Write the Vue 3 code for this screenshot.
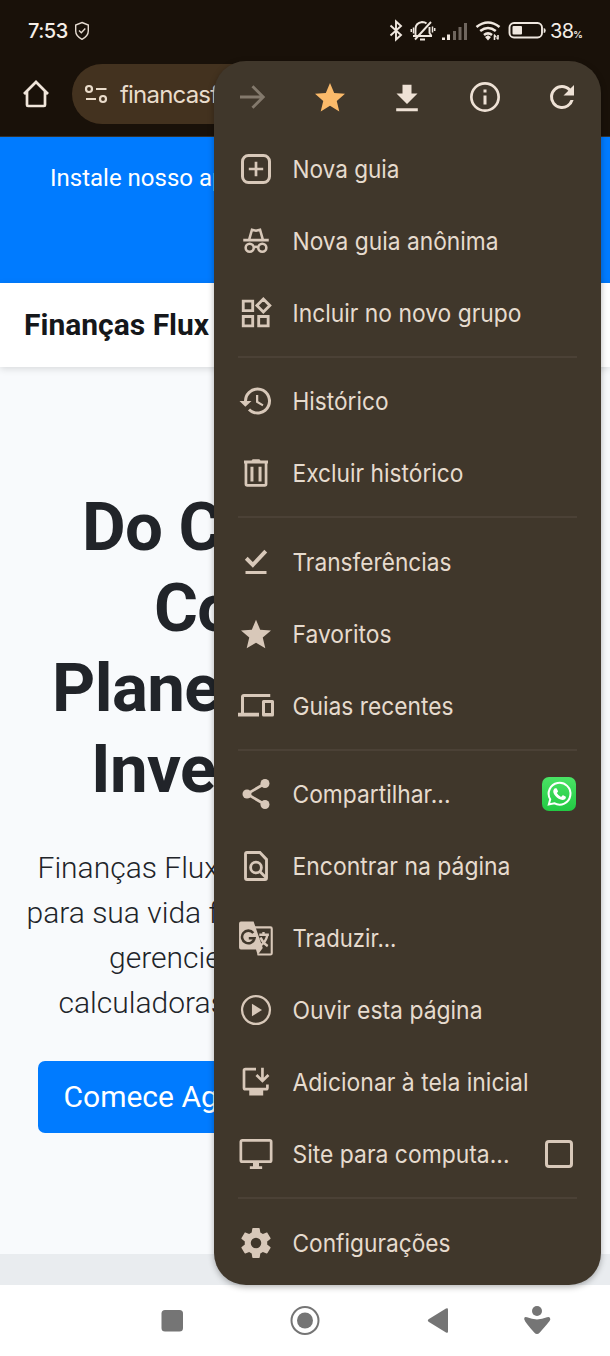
<script setup>
const line = 'fill="none" stroke="currentColor"'

const toolbar = [
  { name: 'forward', svg: `<path ${line} stroke-width="1.9" d="M4 12h15M12.3 4.8 19.5 12l-7.2 7.2"/>` },
  { name: 'star', svg: '<path d="M12 17.9 18.2 21.600 16.5 14.600 22 9.900l-7.2-.6L12 2.600 9.2 9.300 2 9.900l5.5 4.7-1.7 7z"/>' },
  { name: 'download', svg: '<path d="M19 9.700h-4V3.900H9v5.8H5l7 7zM4.8 19.500v2h14.4v-2z"/>' },
  { name: 'info', svg: `<circle ${line} stroke-width="1.8" cx="12" cy="12" r="9.1"/><path d="M11 11h2v6h-2zM11 7h2v2h-2z"/>` },
  { name: 'reload', svg: '<path d="M17.65 6.35A7.96 7.96 0 0 0 12 4a8 8 0 1 0 7.73 10h-2.08A6 6 0 1 1 12 6c1.66 0 3.14.69 4.22 1.78L13 11h7V4z"/>' },
]

const groups = [
  [
    { label: 'Nova guia', w: 107, svg: `<rect ${line} stroke-width="2" x="3" y="3" width="18" height="18" rx="4"/><path ${line} stroke-width="1.8" d="M12 7.2v9.6M7.2 12h9.6"/>` },
    { label: 'Nova guia anônima', w: 206, svg: `<path ${line} stroke-width="1.7" d="M3.5 11.4h17M7.400 11.200l1.900-6.700 2.700.7 2.700-.7 1.900 6.700"/><g ${line} stroke-width="1.700"><circle cx="7.800" cy="16.500" r="2.700"/><circle cx="16.200" cy="16.500" r="2.700"/><path d="M10.500 16.300q1.500-1 3 0"/></g>` },
    { label: 'Incluir no novo grupo', w: 229, svg: `<g ${line} stroke-width="1.9"><path d="M3.5 4.1h6.3v6.3H3.5zM3.5 14.3h6.3v6.3H3.5zM13.8 14.3h6.3v6.3h-6.3zM16.9 2.7l4.3 4.3-4.3 4.3-4.3-4.3z"/></g>` },
  ],
  [
    { label: 'Histórico', w: 96, svg: '<path d="M13 3a9 9 0 0 0-9 9H1l3.9 3.9L9 12H6a7 7 0 1 1 2.06 4.94l-1.42 1.42A9 9 0 1 0 13 3zm-1 5v5l4.3 2.5.7-1.2-3.5-2.1V8z"/>' },
    { label: 'Excluir histórico', w: 171, svg: `<path ${line} stroke-width="1.8" d="M5.3 5.2v14.1q0 .9.9.9h11.6q.9 0 .9-.9V5.2"/><path d="M4 3.7h5l.8-.8h4.4l.8.8h5v1.9H4zM8.3 7.8h2v9.8h-2zM13.7 7.8h2v9.8h-2z"/>` },
  ],
  [
    { label: 'Transferências', w: 159, svg: `<path ${line} stroke-width="2.600" d="M5.500 9.500l4.400 4.400L18.500 4.800"/><path d="M5 18h14v2H5z"/>` },
    { label: 'Favoritos', w: 99, svg: '<path d="M12 17.8 18.2 21.5 16.5 14.4 22 9.7l-7.2-.6L12 2.5 9.2 9.1 2 9.7l5.5 4.7-1.7 7.1z"/>' },
    { label: 'Guias recentes', w: 161, svg: '<path d="M4 6h17.5V4H4a2 2 0 0 0-2 2v10.5H0V19h14v-2.5H4zM23 8h-6a1 1 0 0 0-1 1v9a1 1 0 0 0 1 1h6a1 1 0 0 0 1-1V9a1 1 0 0 0-1-1zm-1 8.7h-4V10h4z"/>' },
  ],
  [
    { label: 'Compartilhar...', w: 158, end: 'whatsapp', svg: `<path ${line} stroke-width="1.8" d="M18 5 6 12l12 7"/><circle cx="18" cy="5" r="3"/><circle cx="6" cy="12" r="3"/><circle cx="18" cy="19" r="3"/>` },
    { label: 'Encontrar na página', w: 218, svg: `<path ${line} stroke-width="1.9" d="M6 3h8.6L19 7.6V20q0 1-1 1H6q-1 0-1-1V4q0-1 1-1z"/><circle ${line} stroke-width="1.9" cx="12" cy="13" r="3.6"/><path ${line} stroke-width="1.9" d="m14.6 15.6 4 4"/>` },
    { label: 'Traduzir...', w: 104, svg: `<path ${line} stroke-width="1.400" d="M11 4.9h10.6q.9 0 .9.9v16.300q0 .9-.9.9H13"/><path fill="currentColor" d="M2 1h8.4l6.1 17.7-3.4 4.700-1.1-3.8H2q-1.3 0-1.3-1.3V2.3Q.7 1 2 1z"/><path ${line} stroke-width="1.600" d="M14.2 9.8h6.4M17 8v1.8M19.6 10q-1 4.6-4.5 7M15 11.7q1.5 3.7 4.8 5.7"/><path fill="none" stroke="#40372b" stroke-width="1.7" d="M10.2 8.700A4.200 4.200 0 1 0 11 12.100H7.2"/>` },
    { label: 'Ouvir esta página', w: 190, svg: `<circle ${line} stroke-width="1.5" cx="12" cy="12" r="9.3"/><path d="M9.3 7.9v8.2L16 12z"/>` },
    { label: 'Adicionar à tela inicial', w: 236, svg: `<path ${line} stroke-width="1.8" d="M12 3.4H5q-1 0-1 1v11.4q0 1 1 1h13.6q1 0 1-1v-2.1M16.3 2.5v8M12.3 7.3l4 4 4-4"/><path d="M7.500 17h9.300v4H7.500z"/>` },
    { label: 'Site para computa...', w: 217, end: 'checkbox', svg: `<rect ${line} stroke-width="1.8" x="1.9" y="2.9" width="20.2" height="14.2" rx="1"/><path d="M10 18h4v2.2h2.1V22H7.900v-1.800H10z"/>` },
  ],
  [
    { label: 'Configurações', w: 158, svg: '<path d="M19.43 12.98c.04-.32.07-.64.07-.98s-.03-.66-.07-.98l2.110-1.650c.19-.15.24-.42.12-.64l-2-3.460c-.12-.22-.39-.3-.61-.22l-2.490 1c-.52-.4-1.080-.73-1.690-.98l-.38-2.650A.49.49 0 0 0 14 2h-4c-.25 0-.46.18-.49.42l-.38 2.650c-.61.25-1.170.59-1.690.98l-2.490-1c-.23-.09-.49 0-.61.22l-2 3.460c-.13.22-.07.49.12.64l2.110 1.650c-.04.32-.07.65-.07.98s.03.66.07.98l-2.110 1.650c-.19.15-.24.42-.12.64l2 3.460c.12.22.39.3.61.22l2.490-1c.52.4 1.080.73 1.690.98l.38 2.650c.03.24.24.42.49.42h4c.25 0 .46-.18.49-.42l.38-2.650c.61-.25 1.170-.59 1.690-.98l2.490 1c.23.09.49 0 .61-.22l2-3.460c.12-.22.07-.49-.12-.64zM12 15.500a3.500 3.500 0 1 1 0-7 3.500 3.500 0 0 1 0 7z"/>' },
  ],
]
</script>

<template>
  <div class="phone">
    <header class="chrome">
      <div class="status">
        <span class="time">7:53</span>
        <svg class="shield" viewBox="0 0 16 20"><path d="M8 1.500 14.300 4v6q0 5-6.300 8.300Q1.700 15 1.700 10V4z" /><path d="m5 9.500 2.300 2.200L11.300 7.500" /></svg>
        <svg class="signals" viewBox="0 0 160 24">
          <g class="stroke">
            <path d="m2.500 6.500 10.500 9.500L8 20.500v-18L13 7 2.500 16.500" />
            <path d="M25 17h19M27.500 16V10q0-6 6.500-7 3 0 4.500 1.500M41.500 8v6l2 3M27 20.500 43 3M32 20.500h5" />
            <path stroke-width="1.500" d="M25.500 8.500v6M23.300 10v3M44.500 7.500v6M46.700 9v3" />
          </g>
          <g class="bars"><path d="M54 18.500h3V21h-3zM59 15.500h3V21h-3z" /><path opacity=".4" d="M65 12h3v9h-3zM70.500 8h3v13h-3zM76 4h3v17h-3z" /></g>
          <g class="stroke wifi"><path d="M88.500 8q11.500-9 23 0M92.200 12q7.800-6 15.600 0M96 16q4-3.200 8 0" /></g>
          <path class="fill" d="m97 18 3-1.700 3 1.700-3 3.500zM106.500 15l2.500 3h-1.700v3h-1.600v-5zM110 21l-2.500-2.500h1.700V16h1.600v4z" />
          <rect class="stroke" x="121.500" y="4" width="32.500" height="14.500" rx="4.500" />
          <rect class="fill" x="124.500" y="7" width="9.500" height="8.500" rx="1" />
          <path class="fill" d="M155.700 9q2 0 2 2.500t-2 2.500z" />
        </svg>
        <span class="charge">38<small>%</small></span>
      </div>
      <div class="address">
        <svg class="home" viewBox="0 0 28 28"><path d="M2 14 14 2l12 12M5 11.500V25q0 1 1 1h16q1 0 1-1V11.500" /></svg>
        <div class="pill">
          <svg viewBox="0 0 24 20"><circle cx="5" cy="5" r="3" /><circle cx="19" cy="15" r="3" /><path d="M12 5h10.500M2 15h10" /></svg>
          <span>financasf</span>
        </div>
      </div>
    </header>

    <main class="page">
      <div class="banner">Instale nosso ap</div>
      <div class="brand">Finanças Flux</div>
      <section class="hero">
        <h1><span class="t1">Do C</span><span class="t2">Co</span><span class="t3">Plane</span><span class="t4">Inve</span></h1>
        <p><span class="p1">Finanças Flux</span><span class="p2">para sua vida f</span><span class="p3">gerencie</span><span class="p4">calculadoras</span></p>
        <div class="cta">Comece Ag</div>
      </section>
      <div class="next"></div>
    </main>

    <nav class="menu">
      <div class="tools">
        <svg v-for="t in toolbar" :key="t.name" :class="t.name" viewBox="0 0 24 24" v-html="t.svg"></svg>
      </div>
      <div v-for="(group, i) in groups" :key="i" class="group">
        <div v-for="item in group" :key="item.label" class="item">
          <svg class="icon" viewBox="0 0 24 24" v-html="item.svg"></svg>
          <svg class="label" :width="item.w + 4" height="36"><text x="0.500" y="26.500" :textLength="item.w" lengthAdjust="spacingAndGlyphs">{{ item.label }}</text></svg>
          <svg v-if="item.end === 'whatsapp'" class="wa" viewBox="0 0 34 34">
            <defs><linearGradient id="wa" x2="0" y2="1"><stop stop-color="#4ae365" /><stop offset="1" stop-color="#22c943" /></linearGradient></defs>
            <rect width="34" height="34" rx="7" fill="url(#wa)" />
            <path d="m6.800 27.500 1.400-5.200a10.900 10.900 0 1 1 4 3.900z" fill="none" stroke="#fff" stroke-width="2" />
            <path fill="#fff" d="M13.200 11.200h1q.5 0 .7.500l1 2.300q.2.500-.1.900l-1 1.200q1.600 2.700 4.300 3.800l1.300-1.400q.3-.4.800-.2l2.200 1.100q.6.300.5.800-.3 2.700-3.400 2.700-4 0-7.300-4.100-3-3.700-1.400-6.300.6-1.200 1.400-1.300z" />
          </svg>
          <span v-if="item.end === 'checkbox'" class="box"></span>
        </div>
      </div>
    </nav>

    <footer class="navbar">
      <svg viewBox="0 0 610 71">
        <rect x="161.500" y="25" width="21.500" height="21.500" rx="3.500" />
        <circle cx="305" cy="35.500" r="13.500" fill="none" stroke="#757575" stroke-width="2" /><circle cx="305" cy="35.500" r="8" />
        <path d="M428.500 34.300 446 23.600q2-1 2 1v21.800q0 2-2 1l-17.500-10.700q-1.500-1.200 0-2.400z" />
        <circle cx="537" cy="26" r="5" />
        <path d="M524.300 34.500q-.8-3.500 2.700-2.200 10 4.200 20 0 3.500-1.300 3.300 2.200-.2 1.500-10.500 13-2.800 3-5.600 0-9-10-9.900-13z" />
      </svg>
    </footer>
  </div>
</template>

<style>
body { background: #fff; }
</style>

<style scoped>
.phone { position: relative; width: 610px; height: 1356px; overflow: hidden; display: flex; flex-direction: column; font-family: Roboto, sans-serif; }
.phone * { box-sizing: border-box; }
.chrome { height: 137px; flex: none; background: #191109; border-bottom: 1px solid #33312d; color: #eee2d6; }
.status { height: 64px; display: flex; align-items: center; padding: 0 0 3px 28px; }
.time { width: 40px; font: 500 20px Inter, sans-serif; letter-spacing: -0.500px; color: #f5eee7; white-space: nowrap; }
.shield { width: 16px; height: 20px; margin-left: 6px; fill: none; stroke: #e5dbd1; stroke-width: 1.400; }
.signals { width: 160px; height: 24px; margin-left: 298px; color: #efe7df; }
.stroke { fill: none; stroke: #efe7df; stroke-width: 1.900; }
.wifi { stroke-width: 2.600; }
.bars, .fill { fill: #efe7df; }
.charge { margin-left: 2px; font: 400 20px Inter, sans-serif; letter-spacing: -0.700px; color: #f5eee7; white-space: nowrap; }
.charge small { font-size: 9.500px; font-weight: 600; }
.address { height: 60px; display: flex; align-items: center; padding-left: 22px; }
.home { width: 28px; height: 28px; fill: none; stroke: #f0e5da; stroke-width: 2.700; }
.pill { margin-left: 22px; width: 500px; height: 60px; border-radius: 30px; background: #43321f; display: flex; align-items: center; padding-left: 12px; }
.pill svg { width: 24px; height: 20px; fill: none; stroke: #eadccb; stroke-width: 2.200; margin-right: 12px; }
.pill span { font: 400 24px Inter, sans-serif; letter-spacing: -0.800px; color: #e9dccc; }
.page { height: 1148px; flex: none; display: flex; flex-direction: column; background: #f8fafc; color: #212429; }
.banner { height: 146px; background: #007bff; color: #fff; padding: 27px 0 0 50px; font-size: 24px; line-height: 28px; letter-spacing: 0; white-space: nowrap; }
.brand { height: 84px; flex: none; padding-left: 24px; line-height: 84px; background: #fff; font-size: 30px; font-weight: 700; color: #15171a; box-shadow: 0 2px 7px rgba(0, 0, 0, .13); }
.hero { height: 887px; padding-top: 120px; white-space: nowrap; }
h1 { margin: 0; font-size: 67.200px; line-height: 80.640px; font-weight: 700; letter-spacing: -0.600px; }
h1 span, p span { display: block; }
.t1 { padding-left: 82px; }
.t2 { padding-left: 154px; }
.t3 { padding-left: 52px; }
.t4 { padding-left: 91px; }
p { margin: 35px 0 0; font-size: 30px; line-height: 45px; font-weight: 300; }
.p1 { padding-left: 37.500px; }
.p2 { padding-left: 26.500px; }
.p3 { padding-left: 109px; }
.p4 { padding-left: 58.500px; }
.cta { margin: 36.500px 0 0 38px; width: 260px; height: 72px; border-radius: 7px; background: #007bff; color: #fff; font-size: 30px; line-height: 72px; padding-left: 25.500px; }
.next { flex: 1; background: #e9ecef; }
.menu { position: absolute; left: 214px; top: 61px; width: 387px; height: 1224px; border-radius: 32px; background: #40372b; box-shadow: 0 2px 6px rgba(0, 0, 0, .3); color: #d8c8b9; }
.tools { height: 72px; display: flex; align-items: center; justify-content: space-between; padding: 0 21px 0 20px; color: #eee1d5; }
.tools svg { width: 36px; height: 36px; fill: currentColor; }
.tools .forward { color: #83796c; }
.tools .star { color: #fbba6a; }
.group + .group { padding-top: 16.400px; background: linear-gradient(#4b4136, #4b4136) 24px 7px / 339px 2px no-repeat; }
.item { height: 72px; display: flex; align-items: center; padding: 0 25px 0 24px; }
.icon { width: 36px; height: 36px; margin-right: 18px; fill: currentColor; flex: none; }
.label { overflow: visible; fill: #e6dbce; font: 400 24.200px Inter, sans-serif; flex: none; }
.wa { width: 34px; height: 34px; margin-left: auto; }
.box { width: 28px; height: 28px; margin: 0 3px 0 auto; border: 3px solid #d8c8b9; border-radius: 4px; }
.navbar { flex: 1; background: #fff; }
.navbar svg { display: block; width: 610px; height: 71px; fill: #757575; }
</style>
